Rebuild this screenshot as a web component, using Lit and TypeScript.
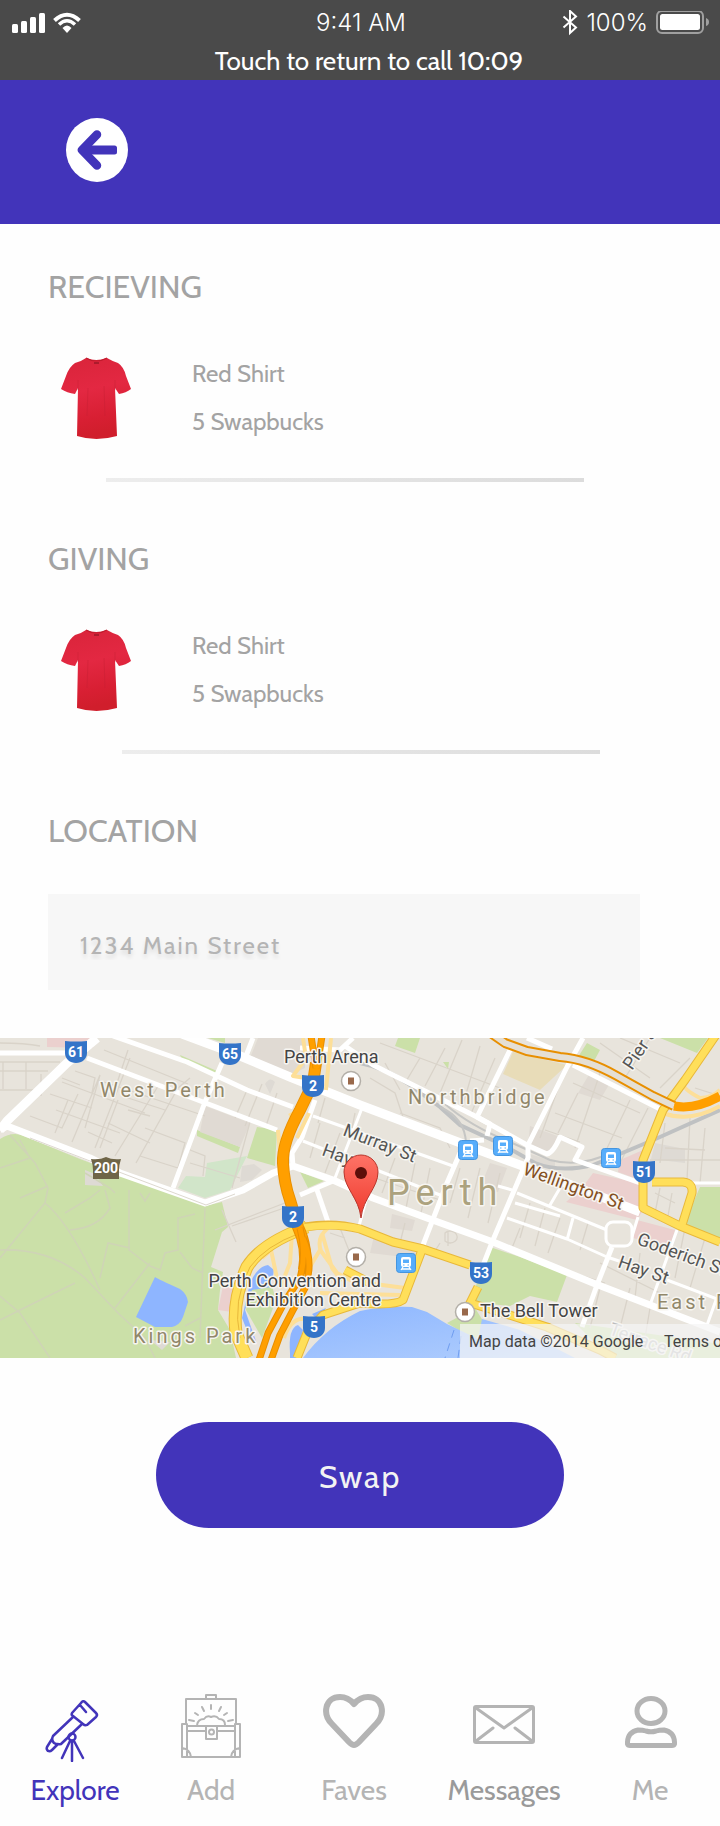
import { LitElement, html, svg, css } from "lit";
import { customElement, property } from "lit/decorators.js";

/* ---------- City map ---------- */

@customElement("city-map")
class CityMap extends LitElement {
  static styles = css`
    :host { display: block; }
    .map { display: block; width: 100%; height: 320px; font-family: Roboto, "Noto Sans", sans-serif; }
    .minor { fill: none; stroke: #d9d3c9; stroke-width: 1.3; }
    .path { fill: none; stroke: #cfd4b6; stroke-width: 1.5; }
    .road { fill: none; stroke: #fff; stroke-linejoin: round; }
    .thin { stroke-width: 3; }
    .mid { stroke-width: 5; }
    .wide { stroke-width: 9; }
    .rail { fill: none; stroke: #bfc1c2; stroke-width: 4; }
    .ramp { fill: none; stroke: #fddf98; stroke-width: 4; stroke-linejoin: round; }
    .edge { fill: none; stroke: #e8b83a; stroke-linejoin: round; }
    .main { fill: none; stroke: #ffdf5a; stroke-linejoin: round; }
    .fwedge { fill: none; stroke: #e88f00; stroke-linejoin: round; }
    .fw { fill: none; stroke: #ff9f00; stroke-linejoin: round; }
    .park { fill: #cbe0a8; }
    .lawn { fill: #d1e5c9; }
    .water { fill: #8eb5ff; }
    .pink { fill: #ebd0ce; }
    .tan { fill: #e8dcb8; }
    .grey { fill: #dedad4; }
    .block { fill: #e0dad3; }
    .label { fill: #444; font-size: 18px; paint-order: stroke; stroke: #f7f5f1; stroke-width: 3px; stroke-linejoin: round; }
    .area { fill: #91876a; font-size: 20px; letter-spacing: 3px; }
    .city { fill: #aca27e; font-size: 36px; letter-spacing: 6px; }
    .street { fill: #555; }
    .brown { fill: #84501f; }
    .faint { fill: #bbb; }
    .num { fill: #fff; font-size: 14px; font-weight: 700; text-anchor: middle; }
    .credit { fill: #444; font-size: 16px; }
  `;

  private shield(x: number, y: number, n: string) {
    return svg`<g transform="translate(${x} ${y})">
      <path d="M-11-11Q0-10 11-11V1C11 7 6 11 0 11C-6 11-11 7-11 1Z" fill="#3474c8"/>
      <text class="num" x="0" y="5">${n}</text></g>`;
  }

  private station(x: number, y: number) {
    return svg`<g transform="translate(${x} ${y})">
      <rect x="-9.5" y="-9.5" width="19" height="19" rx="3" fill="#57adfb" stroke="#4595df"/>
      <rect x="-5" y="-6" width="10" height="10" rx="2" fill="#fff"/>
      <rect x="-3" y="-3.5" width="6" height="3.5" fill="#57adfb"/>
      <path d="M-3 2h1.500M1.500 2H3" stroke="#57adfb"/>
      <path d="M-3 4l-2 3M3 4l2 3M-4 6H4" stroke="#fff" stroke-width="1.300"/></g>`;
  }

  private place(x: number, y: number) {
    return svg`<g transform="translate(${x} ${y})">
      <circle r="9.500" fill="#fff" stroke="#b3afa8" stroke-width="1.500"/>
      <rect x="-3" y="-3.500" width="6" height="7" fill="#99694b"/></g>`;
  }

  render() {
    return html`<svg class="map" viewBox="0 0 720 320" preserveAspectRatio="xMidYMid slice" role="img" aria-label="Map of Perth">
      <defs>
        <linearGradient id="pinfill" x1="0" y1="0" x2="0" y2="1">
          <stop offset="0" stop-color="#ff7367"/><stop offset="1" stop-color="#ee3a2d"/>
        </linearGradient>
        <linearGradient id="river" x1="0" y1="0" x2="1" y2="1">
          <stop offset="0" stop-color="#8db6ff"/><stop offset="1" stop-color="#b2cffd"/>
        </linearGradient>
      </defs>
      <rect width="720" height="320" fill="#e8e4dc"/>

      <path class="park" d="M0 101Q14 92 26 99L80 121L205 168L222 164L228 189L222 194L211 229L223 234L220 252L218 272L230 292L236 320H0Z"/>
      <path class="park" d="M197 92L240 109L238 115L197 98ZM257 89L277 92L275 128L247 120ZM180 17L217 33L214 38L184 25ZM208 0H225V5Z"/>
      <path class="lawn" d="M207 125L247 118L230 152L205 160L178 150L186 138L205 139Z"/>
      <path class="park" d="M490 209L520 219L567 237L557 264L530 258L510 268L470 264ZM700 149H720V200L684 186ZM398 0H420L415 15L395 8ZM587 5L600 12L593 25L578 19ZM660 0H708L697 15ZM443 24l6 0l-1 7zM447 285L475 270L485 286L475 302ZM575 285L720 306V320H610ZM300 134L324 143L308 150Z"/>
      <path class="park" d="M250 250L272 248L276 262L262 300L246 272Z"/>
      <path class="pink" d="M47 0H93V10L47 9ZM620 122L650 109L643 143L618 134ZM593 135L643 146V172L637 182L566 164L582 150ZM637 182L675 192L670 209L633 200ZM223 248L234 249L232 274L218 272Z"/>
      <path class="tan" d="M513 14L567 27L540 52L503 36Z"/>
      <path class="block" d="M258 0H305V30L290 37L250 20ZM530 88L560 99L548 115L528 107ZM590 35L610 45L600 62L578 55ZM392 176L415 182L412 193L390 190ZM374 198L390 203L420 212L412 220L370 215ZM490 125L507 130L498 154L480 150ZM205 68L250 85L240 109L200 94Z"/>
      <path class="grey" d="M265 46q5-8 10-2l-5 12zM242 128l12-2 8 6-10 10-12 2zM85 132l10 4 8 12-18-1zM655 105l30 6v14l-34-4zM530 116l25 8 0 8-20-4zM150 302l20 2-8 8z"/>

      <path class="water" d="M155 239Q158 241 180 251Q187 256 188 264L183 279Q180 287 172 289L155 289L136 279Z"/>
      <path class="water" d="M250 245Q258 228 268 227L274 232L271 249L252 252L245 272L257 306L252 305L242 280Z"/>
      <path class="water" d="M290 315Q288 290 298 287L303 292L296 320H290ZM312 276L326 270L318 282Z"/>
      <path fill="url(#river)" d="M303 320Q325 290 360 273Q385 268 412 269L427 274L447 286L478 301L482 281L520 292L575 320Z"/>
      <path fill="none" stroke="#6f9df0" stroke-dasharray="8 6" d="M454 292L445 320M461 298L458 320"/>

      <path class="minor" d="M0 24H60M0 33H48M0 52H45M3 24V51M26 24V51M41 36V58M0 5Q25 5 40 8M75 33L95 40L92 55M62 44L145 75M50 56L92 70M56 72L120 95M30 78L62 90L78 56M72 104L100 37L85 90M95 110L130 20M115 118L160 45M136 125L178 50L190 40M88 94L112 105M108 85L150 105M145 90L185 105L178 130L140 118M104 12L188 46M98 42L205 78M55 95L68 62M122 58L165 72M100 110L118 62M128 12L112 60M150 78L128 72M62 40L80 47"/>
      <path class="minor" d="M247 52L235 80M262 46L245 88M277 55L266 88M250 84L232 150M185 110L205 118L203 138M190 125L240 140M320 85L310 120M340 95L325 135M325 60L318 85M355 75L350 100M385 25L400 52M420 20L405 45M370 40L395 55L405 85M445 10L425 48M462 2L440 55M480 8L462 70M495 20L470 78M380 5L500 50M400 75L440 90L450 110M560 45L540 100M578 55L558 95M600 35L575 110M630 62L600 125M648 70L620 125M573 45L640 75M555 75L622 100M545 92L580 104M600 5L650 40M620 0L680 25M650 0L625 40M690 20L660 50M695 50L720 58M665 110L705 112M665 85L660 125M690 80L687 142M705 90L700 145M650 122H720"/>
      <path class="minor" d="M395 120L382 155M415 125L405 175M430 130L420 180M375 140L440 162M460 130L450 165M480 130L468 180M500 135L488 185M440 185L475 200M405 185L400 205M440 205L435 213M530 165L520 200M545 170L535 208M588 185L580 212M560 180L548 215M520 190L512 210M533 222L605 245M600 250L590 290M630 250L620 290M650 270L645 300M610 215L600 240M685 190L675 240M705 200L690 250M640 215L635 260M655 155L675 165M660 150L655 175M672 155L668 178M445 195a7 6 0 1 1 0 8zM448 193V208M330 195L345 200M340 190L350 215M600 225L670 260M215 192L290 163M222 172L236 204M232 188L290 168"/>
      <path class="path" d="M0 212Q50 210 85 240L118 275L145 300L155 320M0 282Q40 262 75 245M0 258L20 275L50 320M10 97L35 125L48 150L45 165L0 220M45 165Q70 185 100 252M70 192Q98 190 110 170L105 152M129 152V212L150 228L160 232L165 215L178 212L178 180L195 176M180 214L192 230L203 235M205 170L200 300M115 270L150 225M100 240L108 205L130 210M65 175L90 160L100 152M0 130L30 120L20 102M185 288L200 280M140 155l5 8 5-8M48 148L20 160M85 135L110 150L115 155"/>

      <path class="rail" d="M360 25Q385 30 407 45L440 69L460 87L503 107L535 125Q560 135 593 127Q630 112 660 99L720 72"/>
      <path fill="none" stroke="#c6c6c4" stroke-width="2" d="M440 69Q465 80 466 105M445 66Q470 88 510 104L550 122Q580 130 610 115"/>

      <path class="road wide" d="M97 0L67 25L7 83L0 92M182 -4L233 15L290 39L360 67L487 115L520 127L640 174"/>
      <path class="road mid" d="M0 15H67M113 -2L187 24L247 52L293 69M87 20L203 64L277 92M222 25L205 64L173 150M253 0L246 18"/>
      <path class="road" stroke-width="7" d="M0 92L7 88L90 120L120 135L205 165L243 152L273 135L293 128L333 142L373 160L427 180L493 204L593 245L720 294"/>
      <path fill="none" stroke="#ddd8cf" d="M30 100L90 123L206 167L235 156"/>
      <path class="road mid" d="M315 62L302 99L292 115L293 129M300 157L333 143M317 152L328 184M300 10L340 12L353 0"/>
      <path class="road mid" d="M345 8L373 27L423 52L477 79L527 107L547 116Q553 115 560 99L582 109L575 122L643 146"/>
      <path class="road mid" d="M510 12L477 79L490 86L487 98M470 103L484 102M583 0L567 29L528 107V120L493 202L482 230M460 115L447 145L423 207M527 0L552 11M573 27L662 72"/>
      <path class="road thin" d="M313 78L453 128M303 103L440 157M362 70L335 140M517 155L607 192M507 180L567 201L607 219L640 230M573 180L567 202M638 179L630 205M677 192L650 267M667 242L720 262M716 262L706 290M560 150L550 167M515 165L560 178M652 145H720M512 152L498 148M366 162L359 188"/>
      <path class="road mid" d="M612 209L597 247L582 289"/>
      <rect x="606" y="184" width="26" height="24" rx="7" fill="#e8e4dc" stroke="#fff" stroke-width="3"/>

      <path class="ramp" d="M303 0L306 20L293 38L318 42M331 0L326 52M309 75L297 100M278 92L281 125L288 160M290 75L295 85M328 190Q316 200 321 213L337 235L352 243L405 250M292 195L290 225L280 250M262 220L271 212L278 245M322 195L332 230L342 243M320 212L308 232M683 42Q680 50 700 60Q712 60 720 52M663 75Q690 85 720 68M320 255L400 257M310 282Q292 276 284 300"/>

      <path class="edge" stroke-width="13" d="M247 320L236 295Q232 262 247 229Q262 205 307 189"/>
      <path class="main" stroke-width="11" d="M247 320L236 295Q232 262 247 229Q262 205 307 189"/>
      <path fill="none" stroke="#e8b83a" d="M240 300Q232 262 250 229Q265 208 300 195"/>
      <path class="edge" stroke-width="9" d="M305 189Q333 184 360 191L393 204L423 211L470 227M422 212L403 262Q395 268 360 265L323 277L307 295L297 320M478 249L470 265L503 275L547 289L600 312L615 320M345 232L372 246M716 -3L685 42L663 72L643 122V170L680 188L720 204M652 144H683Q693 145 692 155L682 187"/>
      <path class="main" stroke-width="7" d="M295 191Q333 184 360 191L393 204L423 211L470 227M422 212L403 262Q395 268 360 265L323 277L307 295L297 320M478 249L470 265L503 275L547 289L600 312L615 320M345 232L372 246M716 -3L685 42L663 72L643 122V170L680 188L720 204M652 144H683Q693 145 692 155L682 187"/>

      <path class="fwedge" stroke-width="10" d="M492 -4L505 5L527 13L560 19Q587 21 617 38L653 58L674 68"/>
      <path fill="none" stroke="#e5dfd4" stroke-width="6" d="M492 -4L505 5L527 13L560 19Q587 21 617 38L653 58L674 68"/>
      <path class="fw" stroke-width="9" d="M674 68Q695 72 720 58"/>

      <path class="fwedge" stroke-width="12" d="M316 25L313 45L300 72Q282 105 283 125Q284 145 290 162L298 189Q308 210 304 232"/>
      <path class="fw" stroke-width="10" d="M316 25L313 45L300 72Q282 105 283 125Q284 145 290 162L298 189Q308 210 304 236"/>
      <path class="fwedge" stroke-width="7" d="M311 -2L316 30M322 -2L317 30M300 190Q307 215 300 240L284 265L268 295L259 322M303 200Q314 225 305 250L293 272L280 297L271 322"/>
      <path class="fw" stroke-width="5" d="M311 -2L316 30M322 -2L317 30M300 190Q307 215 300 240L284 265L268 295L259 322M303 200Q314 225 305 250L293 272L280 297L271 322"/>

      <text class="label area" x="100" y="59">West Perth</text>
      <text class="label area" x="408" y="66">Northbridge</text>
      <text class="label area" x="133" y="305">Kings Park</text>
      <text class="label area" x="657" y="271">East Perth</text>
      <text class="label city" x="387" y="167">Perth</text>
      <text class="label" x="284" y="25">Perth Arena</text>
      <text class="label street" transform="translate(342 97) rotate(21)">Murray St</text>
      <text class="label street" transform="translate(321 117) rotate(20)">Hay St</text>
      <text class="label brown" transform="translate(522 136) rotate(20)">Wellington St</text>
      <text class="label street" transform="translate(636 206) rotate(20)">Goderich St</text>
      <text class="label street" transform="translate(617 229) rotate(19)">Hay St</text>
      <text class="label street" transform="translate(632 33) rotate(-56)">Pier St</text>
      <text class="label faint" transform="translate(608 296) rotate(20)">Terrace Rd</text>
      <text class="label" x="381" y="249" text-anchor="end">Perth Convention and</text>
      <text class="label" x="381" y="268" text-anchor="end">Exhibition Centre</text>
      <text class="label" x="480" y="279">The Bell Tower</text>

      ${this.shield(76, 14, "61")}${this.shield(230, 16, "65")}${this.shield(313, 48, "2")}
      ${this.shield(293, 179, "2")}${this.shield(314, 289, "5")}${this.shield(481, 235, "53")}${this.shield(644, 134, "51")}
      <path d="M91 121Q100 122 106 119Q112 122 121 121Q119 127 119 132V141H93V132Q93 127 91 121Z" fill="#6f6547"/>
      <text class="num" x="106" y="135">200</text>
      ${this.station(468, 112)}${this.station(503, 108)}${this.station(611, 120)}${this.station(406, 225)}
      ${this.place(351, 43)}${this.place(356, 219)}${this.place(465, 274)}

      <path d="M361 180C359 160 344 150 344 134A17 17 0 0 1 378 134C378 150 363 160 361 180Z" fill="url(#pinfill)" stroke="#b8362c"/>
      <circle cx="361" cy="135" r="6" fill="#5c0f0a"/>

      <rect x="460" y="286" width="260" height="34" fill="#f5f5f5" fill-opacity="0.7"/>
      <text class="credit" x="469" y="309">Map data ©2014 Google</text>
      <text class="credit" x="664" y="309">Terms of Use</text>
    </svg>`;
  }
}

/* ---------- Item in a swap ---------- */

@customElement("swap-item")
class SwapItem extends LitElement {
  @property() name = "";
  @property() price = "";

  static styles = css`
    :host { display: flex; align-items: center; gap: 60px; padding-left: 60px; color: #a3a3a3; font-size: 24px; line-height: 48px; }
    .shirt { display: block; width: 72px; height: 84px; flex: none; }
    .text { margin: 0; }
  `;

  render() {
    return html`
      <svg class="shirt" viewBox="0 0 72 84" role="img" aria-label=${this.name}>
        <defs>
          <linearGradient id="cloth" x1="0" y1="0" x2="0.200" y2="1">
            <stop offset="0" stop-color="#d9243a"/><stop offset="0.450" stop-color="#e32842"/>
            <stop offset="0.800" stop-color="#d81f33"/><stop offset="1" stop-color="#d01e2c"/>
          </linearGradient>
        </defs>
        <path d="M26 2Q36 6 47 2Q52 5 58 7Q64 11 66 20L71 33Q66 37 59 38L55 32L57 80Q36 86 17 80L18 32L15 38Q7 37 1 33L6 20Q9 11 15 7Q22 5 26 2Z" fill="url(#cloth)"/>
        <path d="M26 2Q36 8 47 2" fill="none" stroke="#c01a2c" stroke-width="1.200"/>
        <path d="M34 7H39" stroke="#8c1522" stroke-width="1.200"/>
        <path d="M18 24V34M55 24V34M28 32L27 60M44 30L45 60" stroke="#c41d32" stroke-opacity="0.400" fill="none"/>
      </svg>
      <div>
        <p class="text">${this.name}</p>
        <p class="text">${this.price}</p>
      </div>`;
  }
}

/* ---------- Screen ---------- */

const icons = {
  explore: svg`<g transform="translate(2 0)" fill="none" stroke="currentColor" stroke-width="2.500" stroke-linejoin="round" stroke-linecap="round">
    <path d="M27 19L36 9Q38 6 40 8L51 19Q53 21 51 23L42 31Q40 32 38 30L28 22Q26 21 27 19ZM35 11L41 18"/>
    <path d="M28 23L8 42Q6 46 9 49Q12 51 16 50L37 30M7 45L2 53Q1 55 3 57Q5 58 7 56L13 50"/>
    <circle cx="27" cy="43" r="3.500"/><path d="M27 47V67M25 47L17 64M29 47L38 64"/></g>`,
  add: svg`<g fill="none" stroke="currentColor" stroke-width="2" stroke-linejoin="round">
    <path d="M7 30V5H57V30M27 5V1H37V5M3 30H8V63H3ZM56 30H61V63H56ZM3 63H61M8 32H56M8 37H27M38 37H56M27 32H38V45H27ZM3 54Q11 55 12 63M61 54Q53 55 52 63"/>
    <circle cx="32.500" cy="38" r="2.500"/>
    <path d="M18 31Q19 25 25 25Q28 21 32 23Q37 21 40 25Q46 25 46 31" /><path stroke-linecap="round" d="M32 11V15M23 13L25 17M42 13L40 17M16 19L19 21M48 19L45 21M10 26L15 27M54 26L49 27"/></g>`,
  faves: svg`<path d="M32 51Q30 51 27 48L10 30C0 20 3 3 18 3Q26 3 32 10Q38 3 46 3C61 3 64 20 54 30L37 48Q34 51 32 51Z" fill="none" stroke="currentColor" stroke-width="6" stroke-linejoin="round"/>`,
  messages: svg`<g fill="none" stroke="currentColor" stroke-width="3" stroke-linejoin="round" stroke-linecap="round"><rect x="2.500" y="12.500" width="59" height="36" rx="1.500"/><path d="M4 14L32 34L60 14M4 47L21 34M60 47L43 34"/></g>`,
  me: svg`<g transform="translate(1 0)" fill="none" stroke="currentColor" stroke-width="5" stroke-linejoin="round"><ellipse cx="32" cy="17" rx="14" ry="12.500"/><path d="M19 36Q24 36 27 37Q32 38.500 37 37Q40 36 45 36Q55 38 55.500 48V50Q55 51.500 53 51.500H11Q9 51.500 8.500 50V48Q9 38 19 36Z"/></g>`,
};

const tabs = [
  { id: "explore", label: "Explore", icon: icons.explore },
  { id: "add", label: "Add", icon: icons.add },
  { id: "faves", label: "Faves", icon: icons.faves },
  { id: "messages", label: "Messages", icon: icons.messages },
  { id: "me", label: "Me", icon: icons.me },
];

@customElement("app-root")
class AppRoot extends LitElement {
  static styles = css`
    :host { display: block; background: #fefefe; color: #a3a3a3; font-family: Cabin, Lato, sans-serif; }
    .status { background: #4a4a4a; color: #fff; height: 80px; box-sizing: border-box; padding: 8px 10px 0 12px; }
    .line { display: grid; grid-template-columns: 1fr auto 1fr; align-items: center; height: 28px; font: 300 24px/30px Inter, sans-serif; }
    .left { display: flex; gap: 8px; align-items: center; }
    .right { display: flex; gap: 8px; align-items: center; justify-content: flex-end; }
    .glyph { display: block; flex: none; }
    .call { display: block; text-align: center; font-size: 26px; line-height: 36px; padding: 7px 0 0 16px; color: #fff; text-decoration: none; }
    .header { background: #4234ba; height: 144px; box-sizing: border-box; padding: 38px 64px; }
    .back { display: block; padding: 0; border: 0; background: none; color: #fff; cursor: pointer; }
    .section { margin-top: 56px; }
    .section:first-child { margin-top: 0; padding-top: 42px; }
    .title { margin: 0 48px 43px; padding-top: 1px; font-size: 32px; line-height: 40px; font-weight: 400; }
    .rule { border: 0; height: 4px; margin: 32px 136px 0 106px; background: linear-gradient(90deg, #ededed, #dcdcdc); }
    .shifted { margin: 32px 120px 0 122px; }
    .field { display: block; margin: 0 80px 48px 48px; }
    .address { display: block; width: 100%; height: 96px; box-sizing: border-box; border: 0; border-radius: 0; background: #f7f7f7; padding: 6px 32px 0; color: #b4b4b4; font: inherit; font-size: 24px; letter-spacing: 2px; text-shadow: 0 4px 4px rgba(0, 0, 0, 0.1); outline: 0; }
    .actions { display: flex; justify-content: center; padding: 64px 24px 0; }
    .swap { width: 408px; max-width: 100%; height: 106px; border: 0; border-radius: 53px; background: #4234ba; color: #f3f3f3; font: inherit; font-size: 32px; letter-spacing: 2px; padding: 2px 0 0; cursor: pointer; }
    .tabs { display: grid; grid-template-columns: 134fr 138fr 148fr 152fr 140fr; padding: 166px 0 19px 8px; }
    .tab { display: flex; flex-direction: column; align-items: center; gap: 11px; color: #b4b4b4; font-size: 28px; line-height: 34px; text-decoration: none; }
    .explore { color: #4234ba; }
    .messages .name { color: #9a9a9a; }
  `;

  render() {
    return html`
      <div class="status">
        <div class="line">
          <div class="left">
            <svg class="glyph" width="33" height="22" viewBox="0 0 33 22" fill="#fff" role="img" aria-label="Signal">
              <rect y="12" width="6" height="9" rx="1.500"/><rect x="9" y="9" width="6" height="12" rx="1.500"/>
              <rect x="18" y="5" width="6" height="16" rx="1.500"/><rect x="27" y="1" width="6" height="20" rx="1.500"/>
            </svg>
            <svg class="glyph" width="28" height="22" viewBox="0 0 28 22" fill="none" stroke="#fff" role="img" aria-label="Wi-Fi">
              <path d="M1.500 8.500Q14-3 26.500 8.500" stroke-width="4"/><path d="M6 12.500Q14 5 22 12.500" stroke-width="3.500"/>
              <path d="M9.500 16Q14 11 18.500 16L14 21Z" fill="#fff" stroke="none"/>
            </svg>
          </div>
          <span>9:41 AM</span>
          <div class="right">
            <svg class="glyph" width="16" height="26" viewBox="0 0 16 26" fill="none" stroke="#fff" stroke-width="2" role="img" aria-label="Bluetooth">
              <path d="M1.500 6.500L14 17.500L8 23V1L14 6.500L1.500 17.500"/>
            </svg>
            <span>100%</span>
            <svg class="glyph" width="54" height="24" viewBox="0 0 54 24" role="img" aria-label="Battery full">
              <rect x="1" y="0" width="46" height="22" rx="5" fill="none" stroke="#a0a0a0" stroke-width="2"/>
              <rect x="4" y="3" width="40" height="16" rx="2.500" fill="#fff"/>
              <path d="M50 7Q53 8 53 11Q53 14 50 15Z" fill="#a0a0a0"/>
            </svg>
          </div>
        </div>
        <a class="call" href="#call">Touch to return to call 10:09</a>
      </div>

      <header class="header">
        <button class="back" aria-label="Back">
          <svg class="glyph" width="66" height="64" viewBox="0 0 66 64">
            <ellipse cx="33" cy="32" rx="31" ry="32" fill="#fff"/>
            <path d="M33 16.500L18 32L33 47.500" fill="none" stroke="#4234ba" stroke-width="8.500" stroke-linecap="round" stroke-linejoin="round"/>
            <rect x="20" y="27.500" width="33" height="9" rx="2.500" fill="#4234ba"/>
          </svg>
        </button>
      </header>

      <main>
        <section class="section">
          <h2 class="title">RECIEVING</h2>
          <swap-item name="Red Shirt" price="5 Swapbucks"></swap-item>
          <hr class="rule" />
        </section>
        <section class="section">
          <h2 class="title">GIVING</h2>
          <swap-item name="Red Shirt" price="5 Swapbucks"></swap-item>
          <hr class="rule shifted" />
        </section>
        <section class="section">
          <h2 class="title"><label for="address">LOCATION</label></h2>
          <div class="field"><input id="address" class="address" type="text" value="1234 Main Street" /></div>
          <city-map></city-map>
        </section>
        <div class="actions"><button class="swap">Swap</button></div>
      </main>

      <nav class="tabs">
        ${tabs.map((t) => html`<a class="tab ${t.id}" href="#${t.id}">
          <svg class="glyph" width="64" height="68" viewBox="0 0 64 68" aria-hidden="true">${t.icon}</svg>
          <span class="name">${t.label}</span>
        </a>`)}
      </nav>`;
  }
}
